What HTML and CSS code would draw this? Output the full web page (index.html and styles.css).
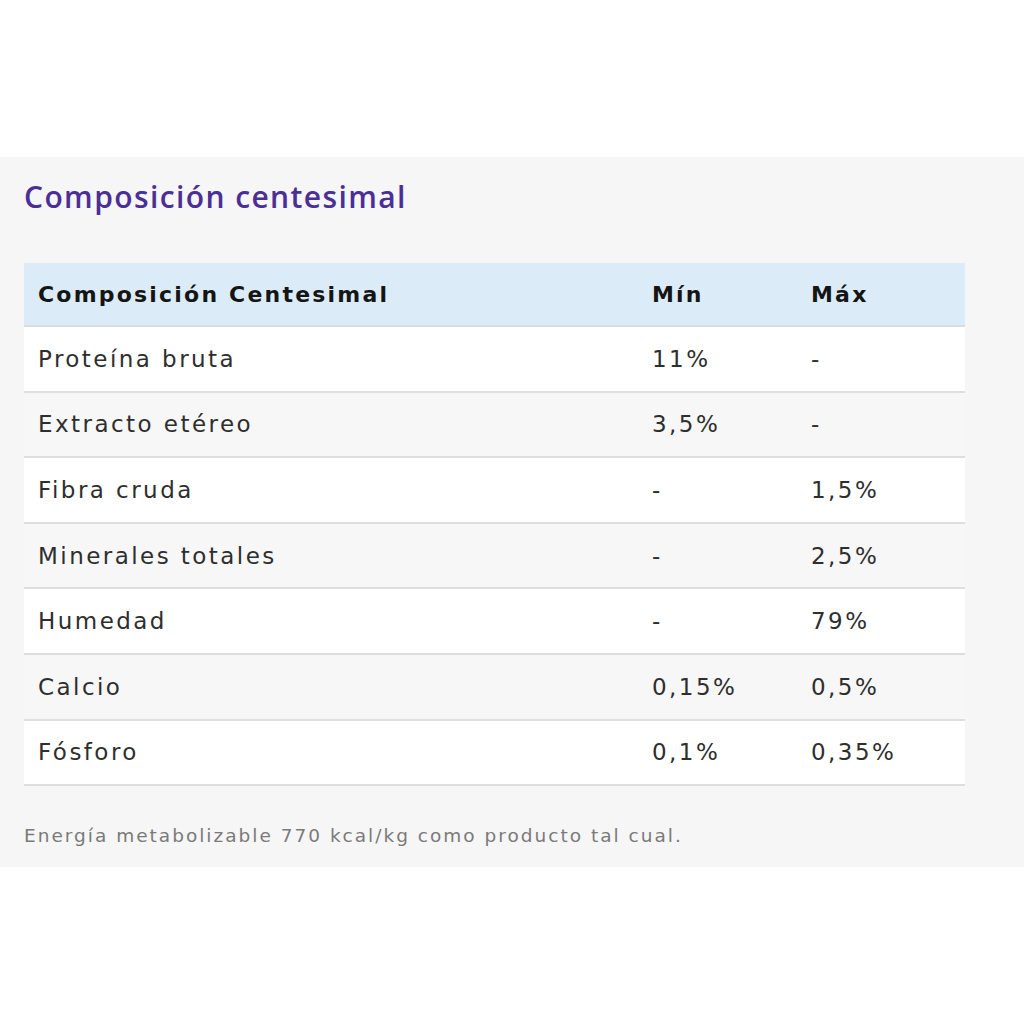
FILE: index.html
```html
<!DOCTYPE html>
<html lang="es">
<head>
<meta charset="utf-8">
<title>Composición centesimal</title>
<link rel="stylesheet" href="styles.css">
</head>
<body>
<div class="top-space"></div>
<section class="comp">
  <h2 class="comp-title">Composición centesimal</h2>
  <table class="comp-table">
    <thead>
      <tr><th class="c1">Composición Centesimal</th><th class="c2">Mín</th><th class="c3">Máx</th></tr>
    </thead>
    <tbody>
      <tr><td>Proteína bruta</td><td>11%</td><td>-</td></tr>
      <tr><td>Extracto etéreo</td><td>3,5%</td><td>-</td></tr>
      <tr><td>Fibra cruda</td><td>-</td><td>1,5%</td></tr>
      <tr><td>Minerales totales</td><td>-</td><td>2,5%</td></tr>
      <tr><td>Humedad</td><td>-</td><td>79%</td></tr>
      <tr><td>Calcio</td><td>0,15%</td><td>0,5%</td></tr>
      <tr><td>Fósforo</td><td>0,1%</td><td>0,35%</td></tr>
    </tbody>
  </table>
  <p class="comp-note">Energía metabolizable 770 kcal/kg como producto tal cual.</p>
</section>
</body>
</html>
```
FILE: styles.css
```css
html, body {
  margin: 0;
  padding: 0;
  background: #ffffff;
}
body {
  font-family: "DejaVu Sans", "Open Sans", sans-serif;
  color: #1f1f1f;
}
.top-space {
  height: 157px;
}
.comp {
  background: #f6f6f6;
  padding: 20px 59px 18px 24px;
}
.comp-title {
  margin: 0;
  font-family: "Open Sans", "DejaVu Sans", sans-serif;
  font-size: 30px;
  font-weight: 600;
  color: #4b2f96;
  letter-spacing: 1.4px;
  line-height: 40px;
}
.comp-table {
  width: 100%;
  border-collapse: collapse;
  margin-top: 46px;
}
.comp-table th,
.comp-table td {
  text-align: left;
  padding: 0 14px;
}
.comp-table th {
  background: #dbecf8;
  font-size: 22px;
  font-weight: 700;
  color: #151515;
  border-bottom: 2px solid #d9dde0;
  height: 62px;
  letter-spacing: 2.2px;
}
.comp-table td {
  font-size: 23px;
  font-weight: 400;
  color: #2e2e2e;
  border-bottom: 2px solid #dedede;
  height: 63.6px;
  letter-spacing: 2.45px;
}
.comp-table .c1 { width: 586px; }
.comp-table .c2 { width: 131px; }
.comp-table tbody tr:nth-child(odd) td { background: #ffffff; }
.comp-table tbody tr:nth-child(even) td { background: #f7f7f7; }
.comp-note {
  margin: 37px 0 0;
  font-size: 18.5px;
  color: #7a7a7a;
  letter-spacing: 2px;
  line-height: 26px;
}
```
